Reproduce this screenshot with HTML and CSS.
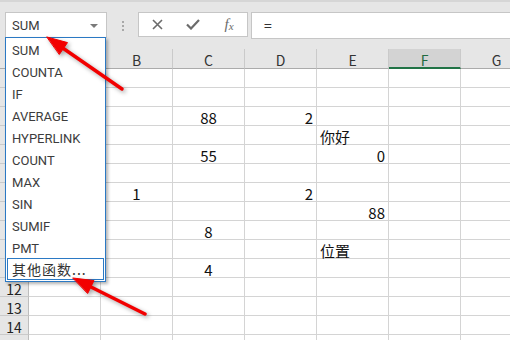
FILE: index.html
```html
<!DOCTYPE html>
<html lang="zh">
<head>
  <meta charset="UTF-8" />
  <title>名称框函数列表</title>
  <link rel="stylesheet" href="styles.css">
</head>
<body>
  <div class="sheet">
    <div class="toolbar">
      <div class="namebox"><span>SUM</span><span class="caret"></span></div>
      <div class="grip"><i></i><i></i><i></i></div>
      <div class="fx-buttons">
        <span class="btn">
          <svg width="11" height="11" viewBox="0 0 11 11"><path d="M1 1L10 10M10 1L1 10" stroke="#6b6b6b" stroke-width="1.6" fill="none"/></svg>
        </span>
        <span class="btn">
          <svg width="14" height="11" viewBox="0 0 14 11"><path d="M1 5.5L5 9.5L13 1" stroke="#6b6b6b" stroke-width="2.2" fill="none"/></svg>
        </span>
        <span class="btn fx">f<small>x</small></span>
      </div>
      <div class="formula">=</div>
    </div>

    <div class="grid">
      <div class="cell corner"></div><div class="cell head">A</div><div class="cell head">B</div><div class="cell head">C</div><div class="cell head">D</div><div class="cell head">E</div><div class="cell head sel">F</div><div class="cell head">G</div>
      <div class="cell rowhead">1</div><div class="cell"></div><div class="cell"></div><div class="cell"></div><div class="cell"></div><div class="cell"></div><div class="cell"></div><div class="cell"></div>
      <div class="cell rowhead">2</div><div class="cell"></div><div class="cell"></div><div class="cell"></div><div class="cell"></div><div class="cell"></div><div class="cell"></div><div class="cell"></div>
      <div class="cell rowhead">3</div><div class="cell"></div><div class="cell"></div><div class="cell c">88</div><div class="cell r">2</div><div class="cell"></div><div class="cell"></div><div class="cell"></div>
      <div class="cell rowhead">4</div><div class="cell"></div><div class="cell"></div><div class="cell"></div><div class="cell"></div><div class="cell l">你好</div><div class="cell"></div><div class="cell"></div>
      <div class="cell rowhead">5</div><div class="cell"></div><div class="cell"></div><div class="cell c">55</div><div class="cell"></div><div class="cell r">0</div><div class="cell"></div><div class="cell"></div>
      <div class="cell rowhead">6</div><div class="cell"></div><div class="cell"></div><div class="cell"></div><div class="cell"></div><div class="cell"></div><div class="cell"></div><div class="cell"></div>
      <div class="cell rowhead">7</div><div class="cell"></div><div class="cell c">1</div><div class="cell"></div><div class="cell r">2</div><div class="cell"></div><div class="cell"></div><div class="cell"></div>
      <div class="cell rowhead">8</div><div class="cell"></div><div class="cell"></div><div class="cell"></div><div class="cell"></div><div class="cell r">88</div><div class="cell"></div><div class="cell"></div>
      <div class="cell rowhead">9</div><div class="cell"></div><div class="cell"></div><div class="cell c">8</div><div class="cell"></div><div class="cell"></div><div class="cell"></div><div class="cell"></div>
      <div class="cell rowhead">10</div><div class="cell"></div><div class="cell"></div><div class="cell"></div><div class="cell"></div><div class="cell l">位置</div><div class="cell"></div><div class="cell"></div>
      <div class="cell rowhead">11</div><div class="cell"></div><div class="cell"></div><div class="cell c">4</div><div class="cell"></div><div class="cell"></div><div class="cell"></div><div class="cell"></div>
      <div class="cell rowhead">12</div><div class="cell"></div><div class="cell"></div><div class="cell"></div><div class="cell"></div><div class="cell"></div><div class="cell"></div><div class="cell"></div>
      <div class="cell rowhead">13</div><div class="cell"></div><div class="cell"></div><div class="cell"></div><div class="cell"></div><div class="cell"></div><div class="cell"></div><div class="cell"></div>
      <div class="cell rowhead">14</div><div class="cell"></div><div class="cell"></div><div class="cell"></div><div class="cell"></div><div class="cell"></div><div class="cell"></div><div class="cell"></div>
      <div class="cell rowhead"></div><div class="cell"></div><div class="cell"></div><div class="cell"></div><div class="cell"></div><div class="cell"></div><div class="cell"></div><div class="cell"></div>
    </div>

    <ul class="func-list">
      <li>SUM</li>
      <li>COUNTA</li>
      <li>IF</li>
      <li>AVERAGE</li>
      <li>HYPERLINK</li>
      <li>COUNT</li>
      <li>MAX</li>
      <li>SIN</li>
      <li>SUMIF</li>
      <li>PMT</li>
      <li class="more">其他函数...</li>
    </ul>

    <svg class="arrows" width="510" height="340" viewBox="0 0 510 340">
      <g fill="#f20000" stroke="#f20000" stroke-linecap="round">
        <line x1="122" y1="89" x2="62" y2="47.5" stroke-width="3.5"/>
        <polygon points="47,37 67.5,42.6 59.5,54.2" stroke-width="1" stroke-linejoin="round"/>
        <line x1="145" y1="314" x2="89" y2="286" stroke-width="3.5"/>
        <polygon points="73,278 94,280.6 87.8,293.2" stroke-width="1" stroke-linejoin="round"/>
      </g>
    </svg>
  </div>
</body>
</html>
```

FILE: styles.css
```css
body {
  margin: 0;
  background-color: #fff;
  font-family: 'Noto Sans CJK SC', sans-serif;
  color: #111;
}
.sheet {
  position: relative;
  width: 510px;
  height: 340px;
  overflow: hidden;
}
.toolbar {
  display: flex;
  align-items: flex-start;
  box-sizing: border-box;
  height: 49px;
  padding-top: 10px;
  background-color: #e6e6e6;
  border-top: 2px solid #d6d6d6;
}
.namebox {
  display: flex;
  align-items: center;
  justify-content: space-between;
  box-sizing: border-box;
  width: 102px;
  height: 26px;
  margin-left: 5px;
  padding: 1px 6px 0 6px;
  background-color: #fff;
  border: 1px solid #c6c6c6;
  font-family: Roboto, sans-serif;
  font-size: 13px;
  color: #3a3a3a;
}
.caret {
  width: 0;
  height: 0;
  border-left: 4px solid transparent;
  border-right: 4px solid transparent;
  border-top: 4px solid #7a7a7a;
  margin-right: 2px;
}
.grip {
  display: flex;
  flex-direction: column;
  align-items: center;
  gap: 2px;
  width: 31px;
  padding-top: 9px;
}
.grip i {
  display: block;
  width: 2px;
  height: 2px;
  background-color: #a8a8a8;
}
.fx-buttons {
  display: grid;
  grid-template-columns: repeat(3, 1fr);
  box-sizing: border-box;
  width: 110px;
  height: 25px;
  background-color: #fff;
  border: 1px solid #c6c6c6;
}
.btn {
  display: flex;
  align-items: center;
  justify-content: center;
}
.fx {
  font-family: 'Liberation Serif', serif;
  font-style: italic;
  font-size: 15px;
  color: #6b6b6b;
}
.fx small {
  font-size: 11px;
  margin-top: 3px;
}
.formula {
  flex: 1;
  box-sizing: border-box;
  height: 27px;
  margin-left: 3px;
  margin-right: -6px;
  padding-left: 12px;
  line-height: 25px;
  background-color: #fff;
  border: 1px solid #c6c6c6;
  font-size: 14px;
  color: #333;
}
.grid {
  display: grid;
  grid-template-columns: 29px repeat(7, 72px);
  grid-template-rows: 20px;
  grid-auto-rows: 19px;
}
.cell {
  display: flex;
  align-items: center;
  box-sizing: border-box;
  border-right: 1px solid #d4d4d4;
  border-bottom: 1px solid #d4d4d4;
  font-size: 15px;
  line-height: 18px;
  white-space: nowrap;
  padding-top: 3px;
}
.cell.c {
  justify-content: center;
}
.cell.r {
  justify-content: flex-end;
  padding-right: 3px;
}
.cell.l {
  padding-left: 3px;
}
.head,
.corner {
  justify-content: center;
  background-color: #e6e6e6;
  border-right-color: #cacaca;
  border-bottom-color: #ababab;
  font-size: 14px;
  color: #333;
}
.head.sel {
  background-color: #d3d3d3;
  border-bottom: 2px solid #217346;
  color: #1f6b40;
}
.rowhead {
  justify-content: center;
  background-color: #e6e6e6;
  border-right-color: #bdbdbd;
  border-bottom-color: #cacaca;
  font-size: 14px;
  color: #222;
}
.func-list {
  position: absolute;
  left: 5px;
  top: 37px;
  width: 101px;
  box-sizing: border-box;
  margin: 0;
  padding: 0 0 1px;
  list-style: none;
  background-color: #fff;
  border: 1px solid #2b79c4;
  box-shadow: 2px 2px 3px rgba(0, 0, 0, 0.3);
  font-family: Roboto, sans-serif;
  font-size: 13px;
  color: #3c3c3c;
}
.func-list li {
  box-sizing: border-box;
  height: 22px;
  padding: 2px 0 0 6px;
  line-height: 21px;
}
.func-list .more {
  margin: 0 1px;
  padding: 0 0 0 4px;
  border: 1px solid #2b79c4;
  line-height: 20px;
  font-family: 'Noto Sans CJK SC', sans-serif;
  font-size: 14px;
  letter-spacing: 1px;
  color: #333;
}
.arrows {
  position: absolute;
  left: 0;
  top: 0;
  pointer-events: none;
  filter: drop-shadow(2px 2px 2px rgba(0, 0, 0, 0.35));
}
```
